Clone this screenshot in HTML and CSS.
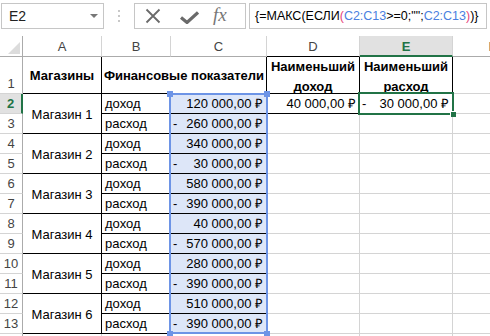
FILE: index.html
```html
<!DOCTYPE html>
<html lang="ru">
<head>
    <meta charset="UTF-8">
    <title>МАКС ЕСЛИ</title>
    <link rel="stylesheet" href="styles.css">
</head>
<body>
    <!-- Formula bar -->
    <div class="formula-bar">
        <div class="name-box">
            <span>E2</span>
            <span class="drop"></span>
        </div>
        <div class="grip">
            <svg width="4" height="12" viewBox="0 0 4 12">
                <rect x="1" y="0" width="2" height="2" fill="#c8c8c8"/>
                <rect x="1" y="5" width="2" height="2" fill="#c8c8c8"/>
                <rect x="1" y="10" width="2" height="2" fill="#c8c8c8"/>
            </svg>
        </div>
        <div class="fx-buttons">
            <svg class="btn-x" width="16" height="16" viewBox="0 0 16 16">
                <path d="M1.5 1.5 L14.5 14.5 M14.5 1.5 L1.5 14.5" stroke="#6a6a6a" stroke-width="1.8" fill="none"/>
            </svg>
            <svg class="btn-ok" width="19" height="13" viewBox="0 0 19 13">
                <path d="M1 6.5 L7 11.5 L18 1.5" stroke="#6a6a6a" stroke-width="3.2" fill="none"/>
            </svg>
            <span class="fx">fx</span>
        </div>
        <div class="formula">{=МАКС(ЕСЛИ<span class="pink">(</span><span class="ref">C2:C13</span>&gt;=0;"";<span class="ref">C2:C13</span><span class="pink">)</span>)}</div>
    </div>

    <!-- Sheet -->
    <div class="sheet">
        <div class="corner"></div>
        <div class="h">A</div>
        <div class="h">B</div>
        <div class="h">C</div>
        <div class="h top-black">D</div>
        <div class="h active-col">E</div>
        <div class="h">F</div>

        <div class="rh rh-first">1</div>
        <div class="c b ctr bR bB">Магазины</div>
        <div class="c b ctr span2 bR bB">Финансовые показатели</div>
        <div class="c b ctr wrap bR bB">Наименьший доход</div>
        <div class="c b ctr wrap bR bB">Наименьший расход</div>
        <div class="c"></div>

        <div class="rh active-row">2</div>
        <div class="c ctr span-r bR bB">Магазин 1</div>
        <div class="c bR bB">доход</div>
        <div class="c sel sel-top bR bB num"><span></span><span>120 000,00 ₽</span></div>
        <div class="c bR bB num"><span></span><span>40 000,00 ₽</span></div>
        <div class="c cur bR bB num"><span>-</span><span>30 000,00 ₽</span></div>
        <div class="c"></div>

        <div class="rh">3</div>
        <div class="c bR bB">расход</div>
        <div class="c sel bR bB num"><span>-</span><span>260 000,00 ₽</span></div>
        <div class="c"></div>
        <div class="c"></div>
        <div class="c"></div>

        <div class="rh">4</div>
        <div class="c ctr span-r bR bB">Магазин 2</div>
        <div class="c bR bB">доход</div>
        <div class="c sel bR bB num"><span></span><span>340 000,00 ₽</span></div>
        <div class="c"></div>
        <div class="c"></div>
        <div class="c"></div>

        <div class="rh">5</div>
        <div class="c bR bB">расход</div>
        <div class="c sel bR bB num"><span>-</span><span>30 000,00 ₽</span></div>
        <div class="c"></div>
        <div class="c"></div>
        <div class="c"></div>

        <div class="rh">6</div>
        <div class="c ctr span-r bR bB">Магазин 3</div>
        <div class="c bR bB">доход</div>
        <div class="c sel bR bB num"><span></span><span>580 000,00 ₽</span></div>
        <div class="c"></div>
        <div class="c"></div>
        <div class="c"></div>

        <div class="rh">7</div>
        <div class="c bR bB">расход</div>
        <div class="c sel bR bB num"><span>-</span><span>390 000,00 ₽</span></div>
        <div class="c"></div>
        <div class="c"></div>
        <div class="c"></div>

        <div class="rh">8</div>
        <div class="c ctr span-r bR bB">Магазин 4</div>
        <div class="c bR bB">доход</div>
        <div class="c sel bR bB num"><span></span><span>40 000,00 ₽</span></div>
        <div class="c"></div>
        <div class="c"></div>
        <div class="c"></div>

        <div class="rh">9</div>
        <div class="c bR bB">расход</div>
        <div class="c sel bR bB num"><span>-</span><span>570 000,00 ₽</span></div>
        <div class="c"></div>
        <div class="c"></div>
        <div class="c"></div>

        <div class="rh">10</div>
        <div class="c ctr span-r bR bB">Магазин 5</div>
        <div class="c bR bB">доход</div>
        <div class="c sel bR bB num"><span></span><span>280 000,00 ₽</span></div>
        <div class="c"></div>
        <div class="c"></div>
        <div class="c"></div>

        <div class="rh">11</div>
        <div class="c bR bB">расход</div>
        <div class="c sel bR bB num"><span>-</span><span>390 000,00 ₽</span></div>
        <div class="c"></div>
        <div class="c"></div>
        <div class="c"></div>

        <div class="rh">12</div>
        <div class="c ctr span-r bR bB">Магазин 6</div>
        <div class="c bR bB">доход</div>
        <div class="c sel bR bB num"><span></span><span>510 000,00 ₽</span></div>
        <div class="c"></div>
        <div class="c"></div>
        <div class="c"></div>

        <div class="rh">13</div>
        <div class="c bR bB">расход</div>
        <div class="c sel sel-bottom bR bB num"><span>-</span><span>390 000,00 ₽</span></div>
        <div class="c"></div>
        <div class="c"></div>
        <div class="c"></div>

        <div class="rh">14</div>
        <div class="c"></div>
        <div class="c"></div>
        <div class="c"></div>
        <div class="c"></div>
        <div class="c"></div>
        <div class="c"></div>
    </div>
</body>
</html>
```

FILE: styles.css
```css
body {
    margin: 0;
    padding: 0;
    background-color: #fff;
    font-family: "Liberation Sans", Arial, sans-serif;
    font-size: 13px;
    color: #000;
    width: 490px;
    height: 336px;
    overflow: hidden;
}

/* Formula bar */
.formula-bar {
    display: flex;
    align-items: flex-start;
    height: 36px;
    padding-top: 3px;
    box-sizing: border-box;
}

.name-box {
    width: 103px;
    height: 26px;
    margin-left: 1px;
    border: 1px solid #c6c6c6;
    box-sizing: border-box;
    display: flex;
    align-items: center;
    justify-content: space-between;
    padding: 0 5px 0 7px;
    font-size: 14px;
    color: #222;
}

.name-box .drop {
    width: 0;
    height: 0;
    border-left: 4px solid transparent;
    border-right: 4px solid transparent;
    border-top: 4px solid #777;
}

.grip {
    width: 30px;
    height: 26px;
    display: flex;
    align-items: center;
    justify-content: center;
}

.fx-buttons {
    width: 112px;
    height: 26px;
    border: 1px solid #c6c6c6;
    box-sizing: border-box;
    display: flex;
    align-items: center;
    padding-left: 10px;
}

.btn-x {
    margin-right: 19px;
}

.btn-ok {
    margin-right: 14px;
    margin-top: 2px;
}

.fx {
    font-family: "Liberation Serif", "Times New Roman", serif;
    font-style: italic;
    font-size: 19px;
    color: #777;
    margin-top: -2px;
}

.formula {
    width: 238px;
    height: 26px;
    margin-left: 3px;
    border: 1px solid #c6c6c6;
    box-sizing: border-box;
    padding-left: 5px;
    line-height: 24px;
    font-size: 12.5px;
    white-space: nowrap;
    overflow: hidden;
}

.formula .ref {
    color: #4a7fe0;
}

.formula .pink {
    color: #e6427a;
}

/* Sheet grid */
.sheet {
    display: grid;
    grid-template-columns: 23px 79px 69px 96px 93px 93px 80px;
    grid-template-rows: 21px 37px repeat(13, 20px);
}

.sheet > div {
    box-sizing: border-box;
    border-right: 1px solid #d4d4d4;
    border-bottom: 1px solid #d4d4d4;
    line-height: 19px;
    white-space: nowrap;
    overflow: visible;
}

.corner {
    position: relative;
    border-right-color: #ababab !important;
    border-bottom-color: #ababab !important;
}

.corner::after {
    content: "";
    position: absolute;
    right: 2px;
    bottom: 2px;
    width: 0;
    height: 0;
    border-left: 12px solid transparent;
    border-bottom: 12px solid #dcdcdc;
}

.h {
    text-align: center;
    color: #444;
    border-bottom-color: #ababab !important;
    padding-top: 1px;
}

.h.top-black {
    border-bottom-color: #000 !important;
}

.h.active-col {
    background-color: #e1e1e1;
    color: #217346;
    font-weight: bold;
    border-bottom: 2px solid #217346 !important;
}

.rh {
    text-align: center;
    color: #444;
    border-right-color: #ababab !important;
}

.rh-first {
    display: flex;
    align-items: flex-end;
    justify-content: center;
}

.rh.active-row {
    background-color: #e1e1e1;
    color: #217346;
    font-weight: bold;
    border-right: 2px solid #217346 !important;
}

.c {
    padding: 0 3px;
}

.b {
    font-weight: bold;
}

.ctr {
    display: flex;
    align-items: center;
    justify-content: center;
    text-align: center;
}

.wrap {
    white-space: normal !important;
    line-height: 20px !important;
    padding-top: 3px;
}

.span2 {
    grid-column: span 2;
}

.span-r {
    grid-row: span 2;
    padding-top: 1px;
}

.bR {
    border-right-color: #000 !important;
}

.bB {
    border-bottom-color: #000 !important;
}

.num {
    display: flex;
    justify-content: space-between;
    padding: 0 3px 0 2px;
}

/* Referenced range C2:C13 */
.sel {
    position: relative;
    background-color: #dde6f8;
}

.sel::after {
    content: "";
    position: absolute;
    top: -1px;
    bottom: -1px;
    left: -2px;
    right: -2px;
    border-left: 2px solid #6d94e6;
    border-right: 2px solid #6d94e6;
    z-index: 2;
}

.sel-top::after {
    border-top: 2px solid #6d94e6;
}

.sel-bottom::after {
    border-bottom: 2px solid #6d94e6;
}

.sel-top::before,
.sel-bottom::before {
    content: "";
    position: absolute;
    left: -4px;
    right: -4px;
    height: 6px;
    z-index: 3;
    background:
        linear-gradient(#6d94e6, #6d94e6) left / 6px 6px no-repeat,
        linear-gradient(#6d94e6, #6d94e6) right / 6px 6px no-repeat;
}

.sel-top::before {
    top: -3px;
}

.sel-bottom::before {
    bottom: -4px;
}

/* Active cell E2 */
.cur {
    position: relative;
}

.cur::after {
    content: "";
    position: absolute;
    top: -2px;
    left: -2px;
    right: -2px;
    bottom: -2px;
    border: 2px solid #217346;
    z-index: 2;
}

.cur::before {
    content: "";
    position: absolute;
    right: -4px;
    bottom: -4px;
    width: 5px;
    height: 5px;
    background-color: #217346;
    border-left: 1px solid #fff;
    border-top: 1px solid #fff;
    z-index: 3;
}
```
